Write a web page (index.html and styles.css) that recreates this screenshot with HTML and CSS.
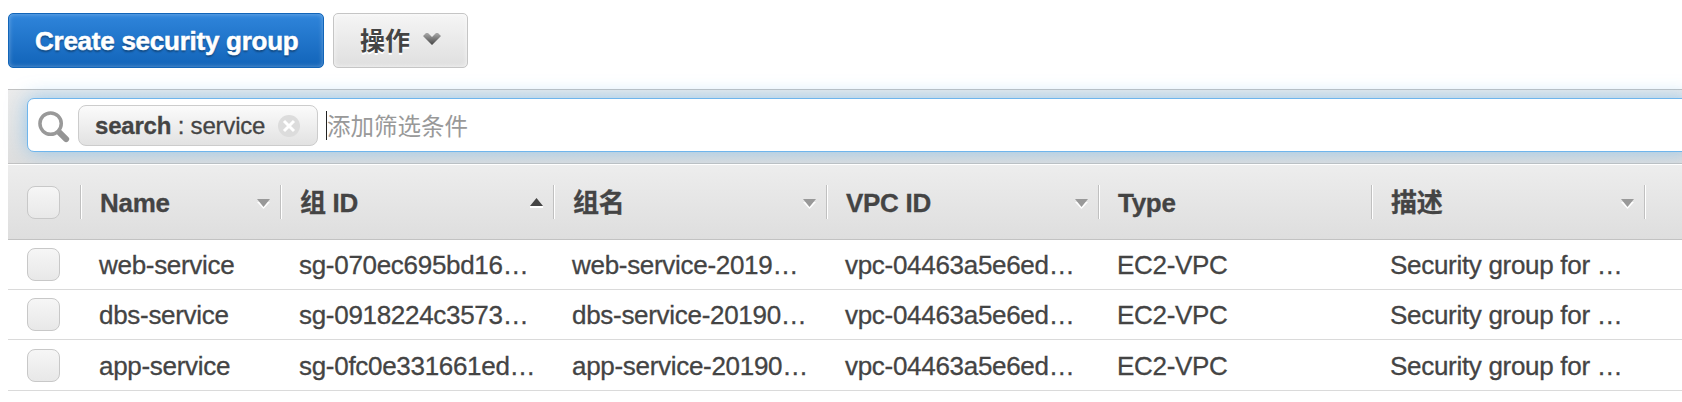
FILE: index.html
```html
<!DOCTYPE html>
<html lang="zh-CN">
<head>
<meta charset="utf-8">
<title>Security groups</title>
<link rel="stylesheet" href="styles.css">
</head>
<body>
<div class="toolbar">
  <button class="btn primary"><span class="t-create">Create security group</span></button>
  <button class="btn plain"><span>操作</span>
    <svg class="chev" width="18" height="12" viewBox="0 0 18 12"><defs><linearGradient id="g" x1="0" y1="0" x2="0" y2="1"><stop offset="0" stop-color="#aaa"/><stop offset="1" stop-color="#444"/></linearGradient></defs><path d="M0 3 3 0h2l4 4 4-4h2l3 3-9 9z" fill="url(#g)"/></svg>
  </button>
</div>
<div class="filter">
  <div class="search">
    <svg class="mag" width="32" height="32" viewBox="0 0 33 33" fill="none" stroke="#949494"><path d="m22 22 7 7" stroke-width="6.2" stroke-linecap="round"/><circle cx="13" cy="13" r="11" stroke-width="3.6" stroke="#999"/></svg>
    <div class="chip"><span class="term"><b>search</b> : service</span>
      <svg width="22" height="22" viewBox="0 0 22 22"><circle cx="11" cy="11" r="11" fill="#dcdcdc"/><path d="m6 6 10 10M16 6 6 16" stroke="#fff" stroke-width="3"/></svg>
    </div>
    <span class="caret"></span><span class="hint">添加筛选条件</span>
  </div>
</div>
<div class="grid head">
  <div class="pick"><i class="box"></i></div>
  <div class="cell"><span>Name</span><svg class="sort" width="15" height="10" viewBox="0 0 15 10"><path d="M1 3l6.500 7L14 3" fill="#fff"/><path d="M1 0h13L7.500 8z" fill="#999"/></svg></div>
  <div class="cell"><span>组 ID</span><svg class="sort up" width="15" height="10" viewBox="0 0 15 10"><path d="M1 8h13v2H1z" fill="#fff"/><path d="M1 8h13L7.500 0z" fill="#444"/></svg></div>
  <div class="cell"><span>组名</span><svg class="sort" width="15" height="10" viewBox="0 0 15 10"><path d="M1 3l6.500 7L14 3" fill="#fff"/><path d="M1 0h13L7.500 8z" fill="#999"/></svg></div>
  <div class="cell"><span>VPC ID</span><svg class="sort" width="15" height="10" viewBox="0 0 15 10"><path d="M1 3l6.500 7L14 3" fill="#fff"/><path d="M1 0h13L7.500 8z" fill="#999"/></svg></div>
  <div class="cell"><span>Type</span></div>
  <div class="cell"><span>描述</span><svg class="sort" width="15" height="10" viewBox="0 0 15 10"><path d="M1 3l6.500 7L14 3" fill="#fff"/><path d="M1 0h13L7.500 8z" fill="#999"/></svg></div>
  <div class="cell"></div>
</div>
<div class="grid row"><div class="pick"><i class="box"></i></div><div>web-service</div><div>sg-070ec695bd16…</div><div>web-service-2019…</div><div>vpc-04463a5e6ed…</div><div>EC2-VPC</div><div>Security group for …</div></div>
<div class="grid row"><div class="pick"><i class="box"></i></div><div>dbs-service</div><div>sg-0918224c3573…</div><div>dbs-service-20190…</div><div>vpc-04463a5e6ed…</div><div>EC2-VPC</div><div>Security group for …</div></div>
<div class="grid row last"><div class="pick"><i class="box"></i></div><div>app-service</div><div>sg-0fc0e331661ed…</div><div>app-service-20190…</div><div>vpc-04463a5e6ed…</div><div>EC2-VPC</div><div>Security group for …</div></div>
</body>
</html>
```
FILE: styles.css
```css
* { box-sizing: border-box; }
body {
  margin: 0;
  padding: 13px 0 0 8px;
  height: 402px;
  overflow: hidden;
  background: #fff;
  color: #444;
  font: 26px/30px "Liberation Sans", "Noto Sans CJK SC", sans-serif;
  -webkit-text-stroke: .3px;
}
.toolbar { display: flex; gap: 9px; height: 76px; }
.btn {
  display: flex;
  align-items: center;
  height: 55px;
  padding: 0;
  border-radius: 5px;
  font: bold 26px/30px "Liberation Sans", "Noto Sans CJK SC", sans-serif;
  white-space: nowrap;
}
.primary {
  width: 316px;
  padding-left: 26px;
  border: 1px solid #1265b8;
  background: linear-gradient(#2f85db, #1264b9);
  box-shadow: inset 0 0 5px rgba(255, 255, 255, .35);
  color: #fff;
  text-shadow: 0 2px 2px rgba(0, 0, 0, .35);
  -webkit-text-stroke: .5px;
}
.t-create { letter-spacing: -.25px; }
.plain {
  width: 135px;
  padding-left: 26px;
  gap: 13px;
  border: 1px solid #c5c5c5;
  background: linear-gradient(#f5f5f5, #dfdfdf);
  box-shadow: inset 0 0 5px rgba(255, 255, 255, .7);
  color: #444;
  font-size: 25px;
  text-shadow: 0 2px 0 #fff;
  -webkit-text-stroke: 0;
}
.chev { margin-top: -4px; }
.filter {
  height: 75px;
  padding: 8px 0 0 19px;
  border-top: 1px solid #c2c2c2;
  border-bottom: 1px solid #c2c2c2;
  background: linear-gradient(#ebebeb, #dedede);
}
.search {
  display: flex;
  align-items: center;
  height: 54px;
  margin-right: -10px;
  padding-left: 10px;
  border: 1px solid #6fb5ec;
  border-radius: 7px;
  background: #fff;
  box-shadow: 0 0 20px rgba(105, 180, 235, .65);
}
.mag { flex: none; margin: 3px 8px 0 0; }
.chip {
  display: flex;
  align-items: center;
  justify-content: space-between;
  width: 240px;
  height: 41px;
  padding: 1px 17px 0 16px;
  border: 1px solid #ccc;
  border-radius: 8px;
  background: linear-gradient(#fbfbfb, #e2e2e2);
  font-size: 24px;
  white-space: nowrap;
}
.term { letter-spacing: -.2px; }
.caret { width: 1px; height: 29px; margin-left: 8px; background: #222; }
.hint { padding-top: 4px; color: #999; font-size: 23.500px; -webkit-text-stroke: 0; }
.grid {
  display: grid;
  grid-template-columns: 72px 200px 273px 273px 272px 273px 273px 1fr;
  align-items: center;
  border-bottom: 1px solid #dadada;
}
.head {
  height: 76px;
  border-top: 1px solid #fff;
  border-bottom-color: #c2c2c2;
  background: linear-gradient(#ededed, #dedede);
  font-weight: bold;
  letter-spacing: -.3px;
}
.pick { padding-left: 19px; }
.box {
  display: block;
  width: 33px;
  height: 33px;
  border: 1px solid #c8c8c8;
  border-radius: 8px;
  background: linear-gradient(#f6f6f6, #e8e8e8);
}
.cell {
  display: flex;
  align-items: center;
  justify-content: space-between;
  height: 34px;
  padding: 1px 9px 0 19px;
  border-left: 1px solid #c0c0c0;
  box-shadow: inset 1px 0 #fff;
  white-space: nowrap;
}
.sort { margin-top: 3px; }
.up { margin-top: 0; }
.row { height: 50px; }
.row > div:not(.pick) { padding: 1px 0 0 19px; white-space: nowrap; letter-spacing: -.3px; }
.last { height: 51px; }
```
